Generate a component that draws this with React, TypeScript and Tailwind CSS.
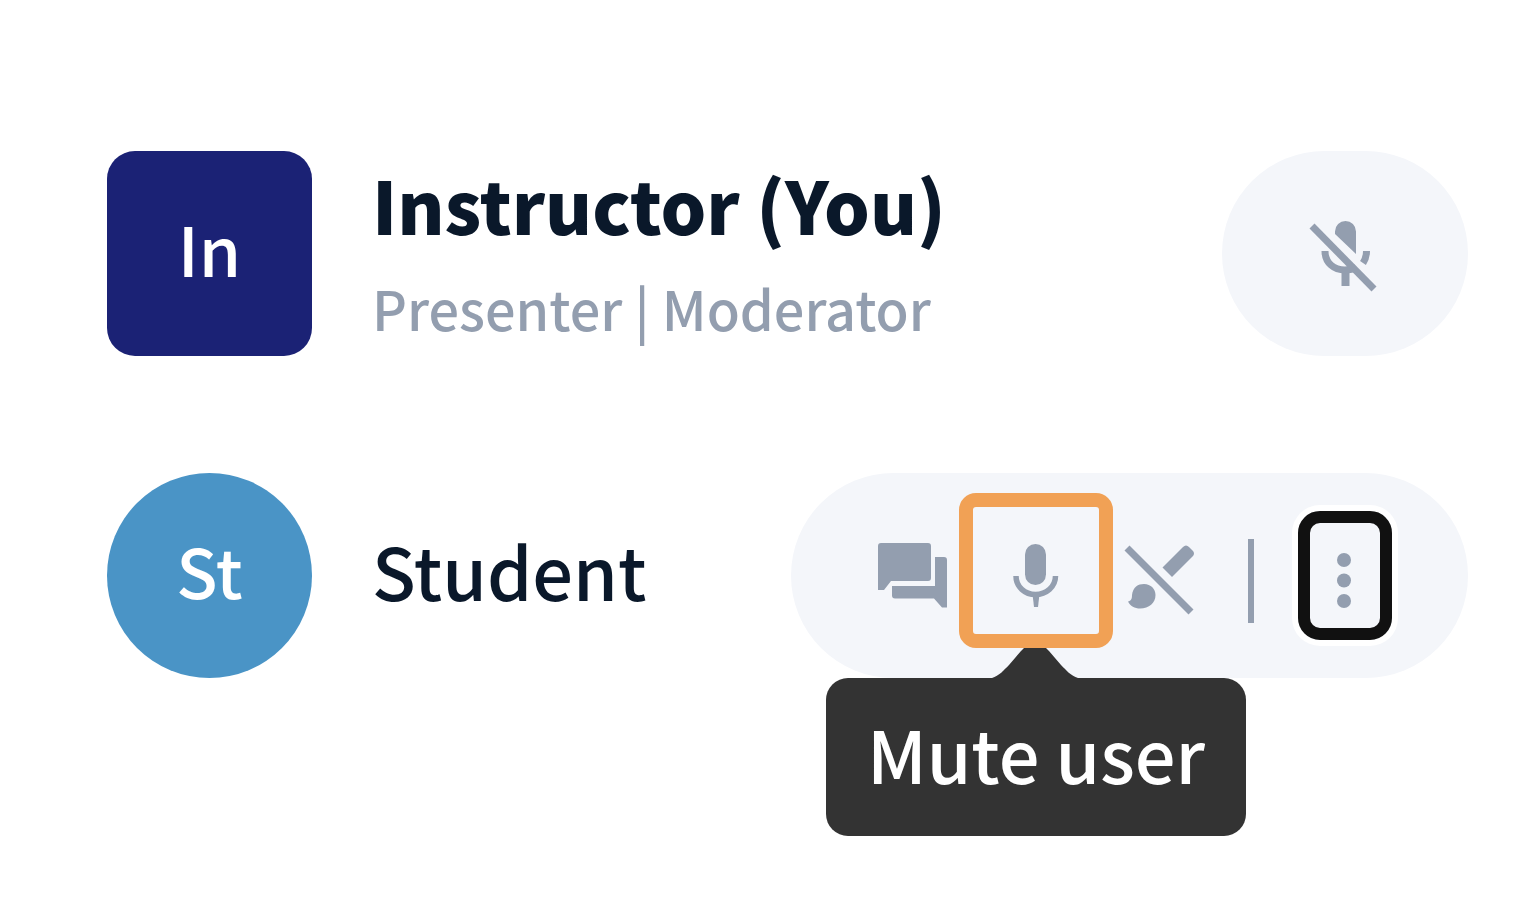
import type { ReactNode } from "react"

function MicIcon() {
  return (
    <svg width="46" height="79" viewBox="0 0 46 79" fill="currentColor" aria-hidden="true">
      <rect x="12" y="8" width="21" height="41" rx="10.500" />
      <path d="M3 40C3 51 12 58.500 22.500 58.500S42.500 51 42.500 40" fill="none" stroke="currentColor" strokeWidth="5.500" />
      <path d="M19.500 58h7l-1.500 13h-4z" />
    </svg>
  )
}

function MicOffIcon() {
  return (
    <svg width="76" height="79" viewBox="0 0 76 79" fill="currentColor" aria-hidden="true">
      <path d="M28 17.500a10.500 10.500 0 0 1 21 0V40L28 20z" />
      <path d="M34.500 55h8v17h-8z" />
      <g fill="none" stroke="currentColor" strokeWidth="7">
        <path d="M18 37C18 49 27 56 38 56C42 56 46 55 49 53" />
        <path d="M59.500 37C59.500 42 58 46 56 49" />
        <path d="M5 12L67 75" />
      </g>
    </svg>
  )
}

function ChatIcon() {
  return (
    <svg width="70" height="79" viewBox="0 0 70 79" fill="currentColor" aria-hidden="true">
      <path d="M3 7H50a3 3 0 0 1 3 3V42a3 3 0 0 1-3 3H13L6 54H0V10a3 3 0 0 1 3-3z" />
      <path d="M57 21H66a3 3 0 0 1 3 3V71.500H64L56 62.500H17a3 3 0 0 1-3-3V50H57z" />
    </svg>
  )
}

function BrushOffIcon() {
  return (
    <svg width="71" height="79" viewBox="0 0 71 79" fill="currentColor" aria-hidden="true">
      <path d="M59 11Q62 8 65 11L69 15Q71 17.500 69 20L48 41L38.500 31.500z" />
      <path d="M8 59C9 51 14 48 20 48C27 48 31.500 53 31.500 59C31.500 67 25 72.500 16 72.500C11 72.500 6 70 4 65.500C7 65 8 63 8 59z" />
      <path d="M3 12L67 76" stroke="currentColor" strokeWidth="7" />
    </svg>
  )
}

function MoreIcon() {
  return (
    <svg width="16" height="79" viewBox="0 0 16 79" fill="currentColor" aria-hidden="true">
      <circle cx="7" cy="24" r="7" />
      <circle cx="7" cy="44.500" r="7" />
      <circle cx="7" cy="65" r="7" />
    </svg>
  )
}

function Avatar({ shape, children }: { shape: string; children: ReactNode }) {
  return (
    <div
      className={`flex size-[205px] shrink-0 items-center justify-center pb-3 text-[68px] leading-none font-medium text-white ${shape}`}
    >
      {children}
    </div>
  )
}

function Tooltip({ text }: { text: string }) {
  return (
    <div
      role="tooltip"
      className="absolute top-full left-1/2 flex h-[158px] w-[420px] -translate-x-1/2 items-center justify-center rounded-[22px] bg-[#333333] pb-2 text-[72px] leading-none font-medium whitespace-nowrap text-white"
    >
      <svg className="absolute bottom-full left-1/2 -translate-x-1/2" width="88" height="30" viewBox="0 0 88 30" aria-hidden="true">
        <path d="M0 30C7 28 12 22 17 17L29 3L32 0H54L57 3L69 17C74 22 79 28 86 30z" fill="#333333" />
      </svg>
      {text}
    </div>
  )
}

export default function App() {
  return (
    <main className="bg-white pt-[150px] pr-[72px] pb-[228px] pl-[107px] font-['Noto_Sans_CJK_SC',sans-serif] text-[#0a182a]">
      <ul className="flex flex-col gap-[116px]">
        <li className="flex items-center">
          <Avatar shape="rounded-[28px] bg-[#1b2275]">In</Avatar>
          <div className="flex-1 pl-15 whitespace-nowrap">
            <h2 className="text-[72px] leading-[108px] font-black">Instructor (You)</h2>
            <p className="text-[54px] leading-[99px] font-medium text-[#939eaf]">Presenter | Moderator</p>
          </div>
          <button
            type="button"
            aria-label="Unmute yourself"
            className="flex h-[205px] w-[246px] shrink-0 items-center justify-center rounded-full bg-[#f4f6fa] text-[#939eaf]"
          >
            <MicOffIcon />
          </button>
        </li>

        <li className="flex items-center">
          <Avatar shape="rounded-full bg-[#4a94c6]">St</Avatar>
          <h2 className="flex-1 pb-3 pl-15 text-[72px] leading-[108px] font-medium">Student</h2>
          <div className="flex h-[205px] shrink-0 items-center rounded-full bg-[#f4f6fa] pr-[76px] pl-[87px] text-[#939eaf]">
            <div className="flex items-center gap-[11px] self-stretch">
              <button type="button" aria-label="Chat">
                <ChatIcon />
              </button>
              <div className="relative flex w-[154px] justify-center self-stretch">
                <button type="button" aria-label="Mute user">
                  <MicIcon />
                </button>
                {/* Highlight around the mute button */}
                <span className="pointer-events-none absolute inset-x-0 top-5 h-[155px] rounded-[17px] border-14 border-[#f1a155]" />
                <Tooltip text="Mute user" />
              </div>
              <button type="button" aria-label="Lock whiteboard">
                <BrushOffIcon />
              </button>
            </div>
            <div className="mt-2.5 mr-11 ml-[53px] h-21 w-1.5 bg-[#939eaf]" />
            <button
              type="button"
              aria-label="More options"
              className="flex h-[129px] w-[94px] items-center justify-center rounded-[22px] border-12 border-[#111111] ring-6 ring-white"
            >
              <MoreIcon />
            </button>
          </div>
        </li>
      </ul>
    </main>
  )
}
